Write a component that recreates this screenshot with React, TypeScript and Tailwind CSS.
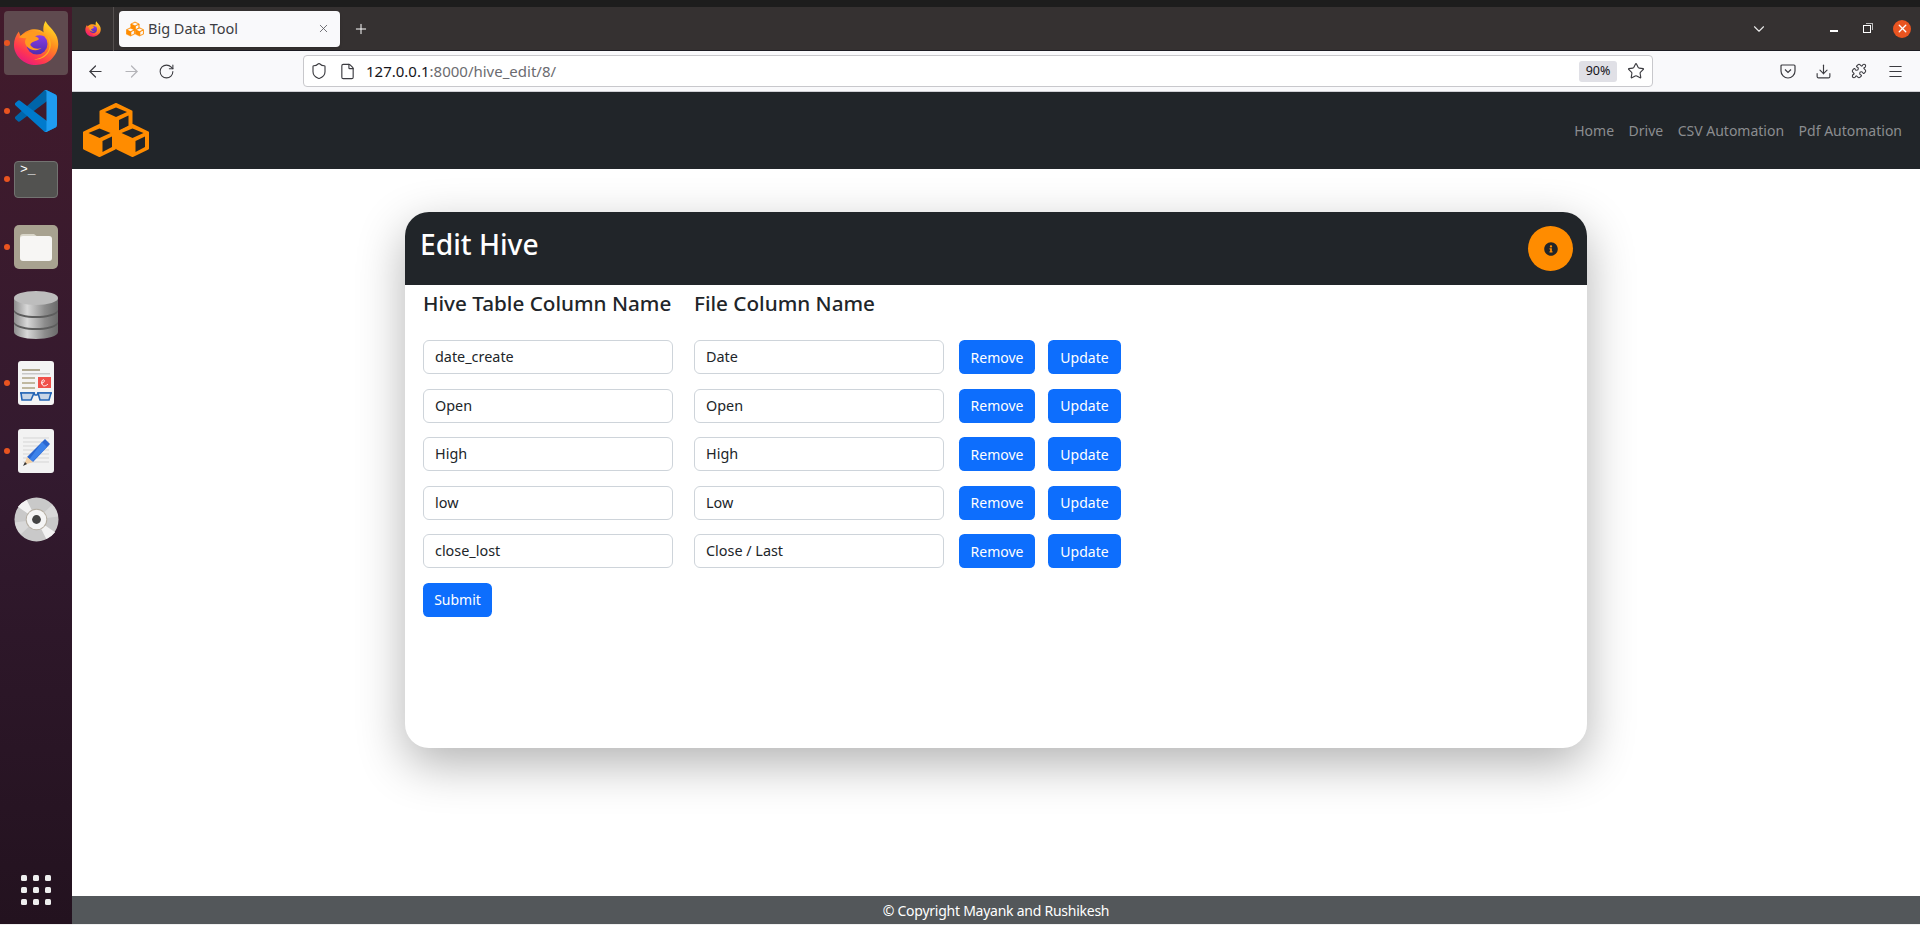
import { ArrowLeft, ArrowRight, ChevronDown, Download, File, Menu, Plus, Puzzle, RotateCw, Shield, Star, X } from "lucide-react";
import { FaInfoCircle } from "react-icons/fa";

const ROWS = [
  ["date_create", "Date"],
  ["Open", "Open"],
  ["High", "High"],
  ["low", "Low"],
  ["close_lost", "Close / Last"],
];

function Cube({ cx, top, inner }: { cx: number; top: number; inner: string }) {
  return (
    <g>
      <polygon
        points={`${cx},${top + 1} ${cx + 15.5},${top + 8.5} ${cx + 15.5},${top + 24.5} ${cx},${top + 32} ${cx - 15.5},${top + 24.5} ${cx - 15.5},${top + 8.5}`}
        fill="#ff8c00"
        stroke="#ff8c00"
        strokeWidth="2"
        strokeLinejoin="round"
      />
      <polygon points={`${cx},${top + 4.5} ${cx + 11},${top + 9} ${cx},${top + 14} ${cx - 11},${top + 9}`} fill={inner} />
      <polygon points={`${cx + 3},${top + 17} ${cx + 12.5},${top + 12.5} ${cx + 12.5},${top + 23} ${cx + 3},${top + 28}`} fill={inner} />
    </g>
  );
}

function CubesLogo({ className, inner = "#212529" }: { className: string; inner?: string }) {
  return (
    <svg viewBox="0 0 66 54" className={className}>
      <Cube cx={33} top={0} inner={inner} />
      <Cube cx={16.5} top={21} inner={inner} />
      <Cube cx={49.5} top={21} inner={inner} />
    </svg>
  );
}

function FirefoxLogo({ className, id }: { className: string; id: string }) {
  return (
    <svg viewBox="0 0 48 48" className={className}>
      <defs>
        <linearGradient id={`${id}-a`} x1="0.8" y1="0" x2="0.2" y2="1">
          <stop offset="0" stopColor="#ffe226" />
          <stop offset="0.4" stopColor="#ff8a1f" />
          <stop offset="0.75" stopColor="#ff3750" />
          <stop offset="1" stopColor="#e31587" />
        </linearGradient>
        <linearGradient id={`${id}-b`} x1="0.5" y1="0" x2="0.5" y2="1">
          <stop offset="0" stopColor="#8f3fea" />
          <stop offset="1" stopColor="#4f2cb0" />
        </linearGradient>
      </defs>
      <path d="M34 1c2 5 9 9 12 17 3 9 0 17-5 22-4 5-11 7-17 7C11 47 1 37 1 26c0-5 2-10 5-14l2 5c3-4 7-6 11-7 5-1 10 0 13 3-1-4 0-9 2-12Z" fill={`url(#${id}-a)`} />
      <circle cx="25" cy="25" r="11" fill={`url(#${id}-b)`} />
      <path d="M6 18c4-4 10-6 17-6 5 0 9 2 12 6-3-2-8-3-12-1 3 1 4 2 4 3-4 3-8 2-9 6 3 4 8 5 12 3-4 4-12 3-16-2-2-3-2-6 0-8-3 0-5 0-8-1Z" fill="#ff9a1f" />
      <path d="M36 16c4 5 5 12 1 18-3 5-9 8-15 7 7 0 15-5 16-13 0-4-1-8-2-12Z" fill="#ffb21f" />
    </svg>
  );
}

function VsCodeLogo() {
  return (
    <svg viewBox="0 0 100 100" className="w-[42px] h-[42px]">
      <path d="M96.46 10.8 75.86.87a6.2 6.2 0 0 0-7.1 1.2L1.35 63.26a4.15 4.15 0 0 0 0 6.15l5.5 5a4.15 4.15 0 0 0 5.3.24L93.36 13.7c2.73-2.07 6.64-.12 6.64 3.3v-.24a6.25 6.25 0 0 0-3.54-5.63Z" fill="#0065a9" />
      <path d="M96.46 89.2 75.86 99.13a6.2 6.2 0 0 1-7.1-1.2L1.35 36.74a4.15 4.15 0 0 1 0-6.15l5.5-5a4.15 4.15 0 0 1 5.3-.24l81.21 61.65c2.73 2.07 6.64.12 6.64-3.3v.24a6.25 6.25 0 0 1-3.54 5.63Z" fill="#007acc" />
      <path d="M75.86 99.13a6.2 6.2 0 0 1-7.11-1.2c2.29 2.29 6.2.67 6.2-2.57V4.64c0-3.24-3.91-4.86-6.2-2.57a6.2 6.2 0 0 1 7.11-1.2l20.6 9.91A6.25 6.25 0 0 1 100 16.41v67.18a6.25 6.25 0 0 1-3.54 5.63l-20.6 9.91Z" fill="#1f9cf0" />
    </svg>
  );
}

function TerminalIcon() {
  return (
    <div className="w-[44px] h-[37px] rounded-[4px] bg-[#525250] border border-[#737371] px-[5px] py-[1px] font-['Liberation_Mono',monospace] text-[13px] leading-[14px] text-white">
      &gt;_
    </div>
  );
}

function FilesIcon() {
  return (
    <svg viewBox="0 0 44 44" className="w-[44px] h-[44px]">
      <rect width="44" height="44" rx="5" fill="#a8a290" />
      <path d="M6 12a3 3 0 0 1 3-3h11l4 3v8H6Z" fill="#d9d6c9" />
      <rect x="6" y="11" width="32" height="25" rx="3" fill="#f7f6f4" />
    </svg>
  );
}

function DatabaseIcon() {
  return (
    <svg viewBox="0 0 46 48" className="w-[46px] h-[48px]">
      <defs>
        <linearGradient id="db-side" x1="0" y1="0" x2="1" y2="0">
          <stop offset="0" stopColor="#8d8d8d" />
          <stop offset="0.3" stopColor="#d8d8d8" />
          <stop offset="0.7" stopColor="#8c8c8c" />
          <stop offset="1" stopColor="#6a6a6a" />
        </linearGradient>
      </defs>
      <path d="M1 7v34c0 4 10 7 22 7s22-3 22-7V7Z" fill="url(#db-side)" />
      <ellipse cx="23" cy="7" rx="22" ry="7" fill="#bdbdbd" />
      <path d="M1 19c3 4 12 6 22 6s19-2 22-6v2c-3 4-12 6-22 6S4 25 1 21Z" fill="#5d5d5d" />
      <path d="M1 31c3 4 12 6 22 6s19-2 22-6v2c-3 4-12 6-22 6S4 37 1 33Z" fill="#5d5d5d" />
    </svg>
  );
}

function ReaderIcon() {
  return (
    <svg viewBox="0 0 36 44" className="w-[36px] h-[44px]">
      <rect width="36" height="44" rx="3" fill="#f4f4f4" />
      <rect x="4" y="8" width="18" height="2" fill="#b0a890" />
      <rect x="4" y="12" width="28" height="1.5" fill="#c8c8c8" />
      <rect x="4" y="16" width="13" height="2" fill="#c0b8a0" />
      <rect x="4" y="21" width="13" height="2" fill="#c0b8a0" />
      <rect x="4" y="26" width="13" height="2" fill="#c0b8a0" />
      <rect x="20" y="16" width="13" height="11" fill="#f0504a" />
      <path d="M23 22c3 0 4-2 3-3s-3 1-2 4 4 2 6 0" fill="none" stroke="#fff" strokeWidth="1" />
      <path d="M2 32h14l1 2 2 0 1-2h14" fill="none" stroke="#2465b5" strokeWidth="1.6" />
      <path d="M3 32l1 7h9l3-7ZM20 32l2 7h9l2-7Z" fill="#c9d6e6" stroke="#2465b5" strokeWidth="1.6" />
    </svg>
  );
}

function PencilIcon() {
  return (
    <svg viewBox="0 0 36 44" className="w-[36px] h-[44px]">
      <rect width="36" height="44" rx="3" fill="#f2f2f2" />
      <path d="M5 9h26M5 13h26M5 17h26M5 21h26M5 25h26M5 29h26M5 33h26" stroke="#d5d5d5" strokeWidth="1" />
      <path d="M27 10l5 5-17 18-6-5Z" fill="#2a66d0" />
      <path d="M24 13l5 5-15 15-3-2Z" fill="#3c82ea" />
      <path d="M9 28l6 5-9 3Z" fill="#f2cfa4" />
      <path d="M7 33l2 2-4 2Z" fill="#333" />
    </svg>
  );
}

function DiscIcon() {
  return (
    <svg viewBox="0 0 46 46" className="w-[45px] h-[45px]">
      <circle cx="23" cy="23" r="22.5" fill="#c9c9c9" />
      <path d="M23 23 4 10A22.5 22.5 0 0 1 13 3ZM23 23l19 13a22.5 22.5 0 0 1-9 7Z" fill="#f2f2f2" />
      <path d="M23 23 45 20a22.5 22.5 0 0 0-6-12ZM23 23 1 26a22.5 22.5 0 0 0 6 12Z" fill="#d8d8d8" />
      <circle cx="23" cy="23" r="11" fill="#b5aea2" />
      <circle cx="23" cy="23" r="10" fill="#f5f5f5" />
      <circle cx="23" cy="23" r="4.5" fill="#444" />
    </svg>
  );
}

function DockItem({ running, active, children }: { running?: boolean; active?: boolean; children: React.ReactNode }) {
  return (
    <div className="relative h-[68px] w-[72px] flex items-center justify-center">
      {active && <div className="absolute left-[4px] top-[2px] w-[64px] h-[64px] rounded-[4px] bg-[#5f4a4f]" />}
      {running && <div className="absolute left-[4px] top-[31px] w-[6px] h-[6px] rounded-full bg-[#e95420]" />}
      <div className="relative flex items-center justify-center">{children}</div>
    </div>
  );
}

function Dock() {
  return (
    <aside className="w-[72px] shrink-0 flex flex-col justify-between pt-[2px] pb-[19px] bg-gradient-to-b from-[#421a2b] via-[#331a2f] to-[#23121f]">
      <div className="flex flex-col">
        <DockItem running active>
          <FirefoxLogo id="dock-ff" className="w-[46px] h-[46px]" />
        </DockItem>
        <DockItem running>
          <VsCodeLogo />
        </DockItem>
        <DockItem running>
          <TerminalIcon />
        </DockItem>
        <DockItem running>
          <FilesIcon />
        </DockItem>
        <DockItem>
          <DatabaseIcon />
        </DockItem>
        <DockItem running>
          <ReaderIcon />
        </DockItem>
        <DockItem running>
          <PencilIcon />
        </DockItem>
        <DockItem>
          <DiscIcon />
        </DockItem>
      </div>
      <div className="mx-auto grid grid-cols-3 gap-[6px]">
        {Array.from({ length: 9 }).map((_, i) => (
          <div key={i} className="w-[6px] h-[6px] rounded-[1.5px] bg-[#eeeeee]" />
        ))}
      </div>
    </aside>
  );
}

function BrowserChrome() {
  return (
    <div className="shrink-0">
      <div className="h-[44px] bg-[#353131] flex items-center border-b border-[#1c1b22]">
        <div className="w-[42px] h-[44px] flex items-center justify-center border-r border-[#55504f]">
          <FirefoxLogo id="tab-ff" className="w-[16px] h-[16px]" />
        </div>
        <div className="ml-[5px] w-[221px] h-[36px] rounded-[4px] bg-[#f9f9fb] flex items-center pl-[7px] pr-[10px] shadow-sm">
          <CubesLogo inner="#f9f9fb" className="w-[18px] h-[16px] shrink-0" />
          <span className="ml-[4px] flex-1 text-[14.5px] text-[#3c3c42]">Big Data Tool</span>
          <X className="w-[13px] h-[13px] text-[#55555a]" strokeWidth={1.5} />
        </div>
        <Plus className="ml-[13px] w-[16px] h-[16px] text-white" strokeWidth={1.5} />
        <div className="flex-1" />
        <ChevronDown className="w-[18px] h-[18px] text-[#e8e8e8] mr-[62px]" strokeWidth={1.5} />
        <div className="w-[8px] h-[1.5px] bg-white mr-[25px] mt-[5px]" />
        <div className="relative w-[8px] h-[8px] border border-white mr-[22px]">
          <div className="absolute -top-[3px] -right-[3px] w-[7px] h-[7px] border-t border-r border-[#bbbbbb]" />
        </div>
        <div className="w-[18px] h-[18px] rounded-full bg-[#e95420] flex items-center justify-center mr-[9px]">
          <X className="w-[13px] h-[13px] text-white" strokeWidth={2.5} />
        </div>
      </div>
      <div className="h-[41px] bg-[#f9f9fb] border-b border-[#cfcfd4] flex items-center text-[#3b3b40]">
        <ArrowLeft className="ml-[14px] w-[19px] h-[19px]" strokeWidth={1.5} />
        <ArrowRight className="ml-[17px] w-[19px] h-[19px] text-[#b4b4b8]" strokeWidth={1.5} />
        <RotateCw className="ml-[17px] w-[17px] h-[17px]" strokeWidth={1.5} />
        <div className="ml-[128px] w-[1350px] h-[32px] bg-white border border-[#c8c8cc] rounded-[4px] flex items-center pl-[6px] pr-[7px]">
          <Shield className="w-[18px] h-[18px]" strokeWidth={1.5} />
          <File className="ml-[11px] w-[17px] h-[17px]" strokeWidth={1.6} />
          <span className="ml-[10px] flex-1 text-[15px] text-[#6b6b70]">
            <span className="text-[#15141a]">127.0.0.1</span>:8000/hive_edit/8/
          </span>
          <span className="w-[38px] h-[21px] rounded-[3px] bg-[#e0e0e6] text-[12.5px] text-[#15141a] flex items-center justify-center">90%</span>
          <Star className="ml-[10px] w-[18px] h-[18px]" strokeWidth={1.5} />
        </div>
        <svg viewBox="0 0 16 16" className="ml-[127px] w-[16px] h-[16px]" fill="none" stroke="currentColor" strokeWidth="1.2">
          <path d="M2 2h12a1 1 0 0 1 1 1v5a7 7 0 0 1-14 0V3a1 1 0 0 1 1-1Z" />
          <path d="M5 6.5 8 9.5l3-3" />
        </svg>
        <Download className="ml-[19px] w-[17px] h-[17px]" strokeWidth={1.6} />
        <Puzzle className="ml-[19px] w-[16px] h-[16px]" strokeWidth={1.6} />
        <Menu className="ml-[20px] w-[17px] h-[17px]" strokeWidth={1.6} />
      </div>
    </div>
  );
}

function MappingRow({ hive, file }: { hive: string; file: string }) {
  return (
    <div className="flex items-center">
      <div className="w-[250px] h-[34px] rounded-[6px] border border-[#ced4da] bg-white px-[11px] flex items-center text-[14.4px] text-[#212529]">{hive}</div>
      <div className="ml-[21px] w-[250px] h-[34px] rounded-[6px] border border-[#ced4da] bg-white px-[11px] flex items-center text-[14.4px] text-[#212529]">{file}</div>
      <button className="ml-[15px] w-[76px] h-[34px] rounded-[5.4px] bg-[#0d6efd] text-[14px] text-white">Remove</button>
      <button className="ml-[13px] w-[73px] h-[34px] rounded-[5.4px] bg-[#0d6efd] text-[14px] text-white">Update</button>
    </div>
  );
}

export default function App() {
  return (
    <div className="w-[1920px] h-[925px] overflow-hidden flex flex-col bg-[#f0f0f0] font-['Noto_Sans',sans-serif]">
      <div className="h-[7px] shrink-0 bg-[#1d1d1d]" />
      <div className="h-[917px] flex">
        <Dock />
        <div className="flex-1 min-w-0 flex flex-col bg-white">
          <BrowserChrome />
          <nav className="h-[77px] shrink-0 bg-[#212529] flex items-center justify-between pl-[11px] pr-[18px]">
            <CubesLogo className="w-[66px] h-[54px] mt-[-1px]" />
            <div className="flex gap-[14.5px] text-[14px] text-[#8b8d90]">
              <span>Home</span>
              <span>Drive</span>
              <span>CSV Automation</span>
              <span>Pdf Automation</span>
            </div>
          </nav>
          <main className="flex-1 min-h-0 pt-[43px]">
            <div className="mx-auto w-[1182px] h-[536px] rounded-[24px] bg-white shadow-[0_16px_48px_rgba(0,0,0,0.3)] overflow-hidden">
              <div className="h-[73px] bg-[#212529] flex items-start justify-between pl-[15px] pr-[14px]">
                <h2 className="mt-[11px] text-[28.2px] font-medium text-white">Edit Hive</h2>
                <button className="mt-[14px] w-[45px] h-[45px] rounded-full bg-[#ff8c00] flex items-center justify-center text-[#212529]">
                  <FaInfoCircle className="w-[14px] h-[14px]" />
                </button>
              </div>
              <div className="px-[18px]">
                <div className="flex h-[55px] pt-[3px] text-[20.7px] font-medium text-[#212529]">
                  <h4 className="w-[271px]">Hive Table Column Name</h4>
                  <h4>File Column Name</h4>
                </div>
                <div className="flex flex-col gap-[14.5px]">
                  {ROWS.map(([hive, file]) => (
                    <MappingRow key={hive} hive={hive} file={file} />
                  ))}
                  <button className="w-[69px] h-[34px] rounded-[5.4px] bg-[#0d6efd] text-[14px] text-white">Submit</button>
                </div>
              </div>
            </div>
          </main>
          <footer className="h-[28px] shrink-0 bg-[#53575a] flex items-center justify-center text-[14px] tracking-[-0.25px] text-white">© Copyright Mayank and Rushikesh</footer>
        </div>
      </div>
    </div>
  );
}
